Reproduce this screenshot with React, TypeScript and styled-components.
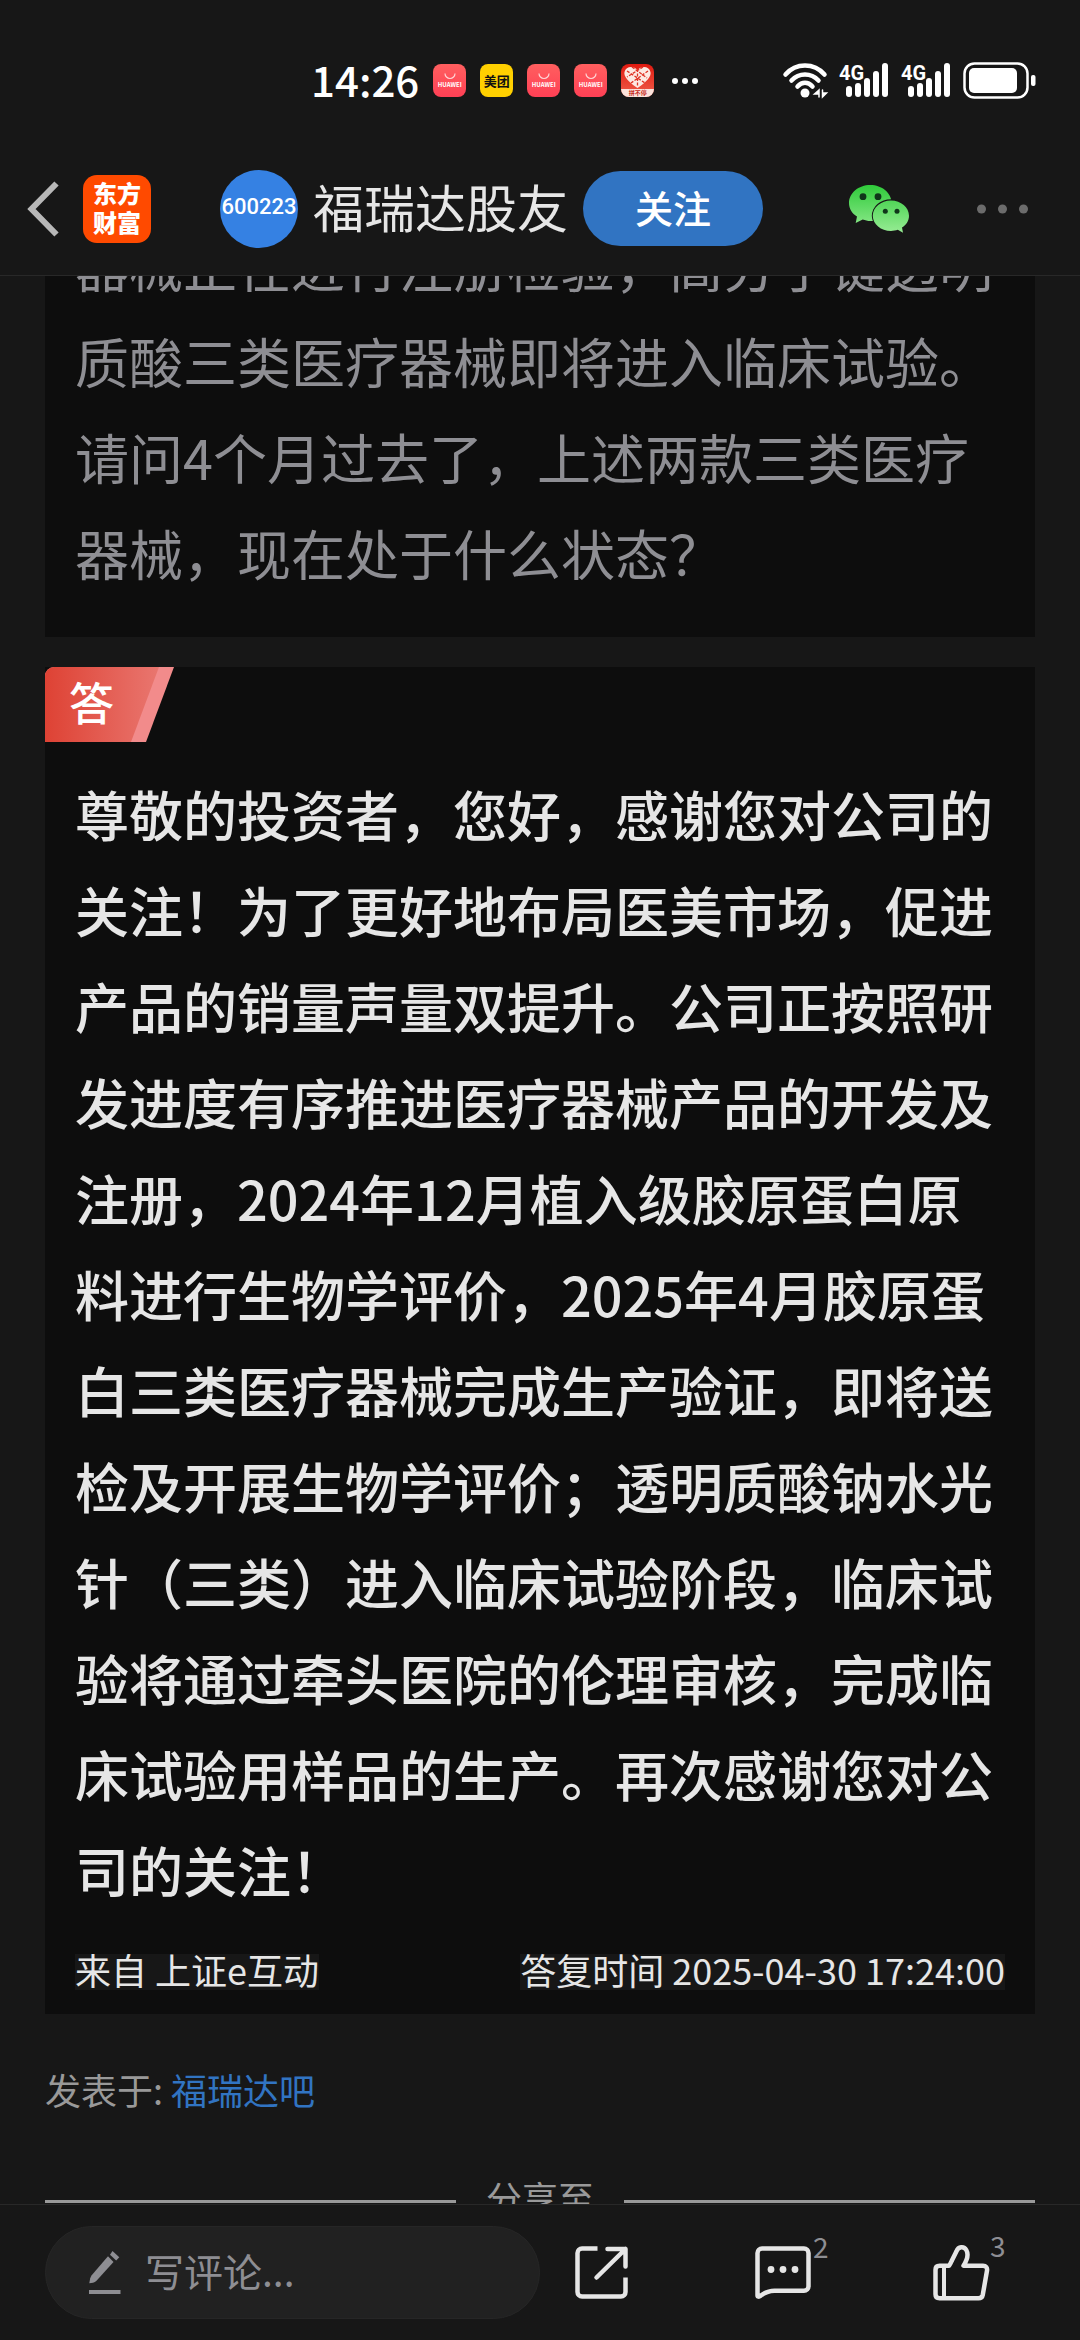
import React from "react";
import styled, { createGlobalStyle } from "styled-components";

const GlobalStyle = createGlobalStyle`
  *, *::before, *::after { box-sizing: border-box; }
  body {
    margin: 0;
    background: #171717;
    color: #e6e6e6;
    font-family: "Noto Sans CJK SC", "Noto Sans", sans-serif;
  }
  button, input { font-family: inherit; }
  button { border: 0; padding: 0; background: none; color: inherit; }
  svg { display: block; flex: none; overflow: visible; }
`;

const Screen = styled.div`
  display: flex;
  flex-direction: column;
  height: 100vh;
  background: #171717;
`;

/* ---------- status bar ---------- */

const StatusBar = styled.div`
  flex: none;
  display: flex;
  align-items: center;
  justify-content: space-between;
  height: 142px;
  padding: 19px 44px 0 311px;
`;

const StatusGroup = styled.div<{ $gap: number }>`
  display: flex;
  align-items: center;
  gap: ${(p) => p.$gap}px;
`;

const Clock = styled.time`
  padding-bottom: 4px;
  font-size: 42px;
  font-weight: 500;
  line-height: 48px;
  color: #fff;
`;

const AppBadge = styled.span<{ $bg: string; $color: string; $size: number }>`
  display: flex;
  flex-direction: column;
  align-items: center;
  justify-content: center;
  width: 33px;
  height: 33px;
  border-radius: 8px;
  overflow: hidden;
  background: ${(p) => p.$bg};
  color: ${(p) => p.$color};
  font-size: ${(p) => p.$size}px;
  font-weight: 700;
  line-height: 8px;
  white-space: nowrap;
`;

const PromoStrip = styled.span`
  width: 100%;
  text-align: center;
  background: #fbe3dc;
  color: #c4291c;
`;

/* ---------- header ---------- */

const Header = styled.header`
  flex: none;
  display: flex;
  align-items: center;
  height: 134px;
  padding: 0 52px 0 27px;
  border-bottom: 1px solid #282828;
`;

const IconButton = styled.button`
  position: relative;
  display: flex;
  align-items: center;
  cursor: pointer;
`;

const Logo = styled.span`
  display: flex;
  align-items: center;
  justify-content: center;
  width: 68px;
  height: 68px;
  margin-left: 24px;
  padding-bottom: 4px;
  border-radius: 14px;
  background: #ff4a00;
  color: #fff;
  font-size: 24px;
  font-weight: 900;
  line-height: 29px;
  text-align: center;
`;

const Author = styled.div`
  display: flex;
  align-items: center;
  margin: 0 auto 0 69px;
`;

const Avatar = styled.span`
  display: flex;
  align-items: center;
  justify-content: center;
  width: 78px;
  height: 78px;
  padding-bottom: 4px;
  border-radius: 50%;
  background: #3581e3;
  color: #fff;
  font-family: Roboto, sans-serif;
  font-size: 22px;
  font-weight: 500;
`;

const AuthorName = styled.h1`
  margin: 0 15px;
  padding-bottom: 6px;
  font-size: 51px;
  font-weight: 400;
  line-height: 60px;
  white-space: nowrap;
`;

const FollowButton = styled.button`
  width: 180px;
  height: 75px;
  padding-bottom: 4px;
  border-radius: 38px;
  background: #3174c2;
  color: #fff;
  font-size: 38px;
  font-weight: 500;
  line-height: 48px;
  cursor: pointer;
`;

const HeaderActions = styled.div`
  display: flex;
  align-items: center;
  gap: 68px;
`;

/* ---------- post ---------- */

const Scroller = styled.main`
  flex: 1;
  min-height: 0;
  overflow: hidden;
  padding: 0 45px;
`;

const Card = styled.section`
  background: #0d0d0d;
  overflow: hidden;
  & + & { margin-top: 30px; }
`;

/* The post is scrolled: its top line is half under the header. */
const Question = styled.p`
  margin: -59px 0 36px;
  padding: 0 30px;
  color: #8e8e93;
  font-size: 54px;
  line-height: 96px;
`;

const AnswerTag = styled.div`
  width: 129px;
  height: 75px;
  border-top-left-radius: 9px;
  background: #f28b8b;
  clip-path: polygon(0 0, 100% 0, 101px 100%, 0 100%);
`;

const TagFace = styled.span`
  display: flex;
  align-items: center;
  width: 114px;
  height: 100%;
  padding: 0 0 6px 24px;
  border-top-left-radius: 9px;
  background: linear-gradient(90deg, #de4234, #e9766f);
  clip-path: polygon(0 0, 100% 0, 86px 100%, 0 100%);
  color: #fff;
  font-size: 45px;
  font-weight: 500;
  line-height: 60px;
`;

const Answer = styled.p`
  margin: 24px 0 36px;
  padding: 0 30px;
  font-size: 54px;
  font-weight: 500;
  line-height: 96px;
`;

const Source = styled.div`
  display: flex;
  justify-content: space-between;
  padding: 0 30px 24px;
  font-size: 36px;
  line-height: 30px;
`;

const SourceItem = styled.span`
  padding-bottom: 6px;
  background: #171717;
`;

const PostedIn = styled.p`
  margin: 48px 0 0;
  color: #999;
  font-size: 36px;
  line-height: 54px;
`;

const BarLink = styled.a`
  color: #3174c2;
  text-decoration: none;
`;

const ShareDivider = styled.div`
  display: flex;
  align-items: center;
  gap: 30px;
  margin-top: 54px;
  color: #999;
  font-size: 36px;
  line-height: 54px;
  &::before, &::after {
    content: "";
    flex: 1;
    height: 3px;
    margin-top: 9px;
    background: #999;
  }
`;

/* ---------- bottom bar ---------- */

const BottomBar = styled.footer`
  flex: none;
  display: flex;
  align-items: center;
  height: 136px;
  padding: 0 90px 0 45px;
  border-top: 1px solid #282828;
`;

const CommentBox = styled.label`
  flex: none;
  display: flex;
  align-items: center;
  gap: 24px;
  width: calc(50vw - 45px);
  height: 93px;
  padding: 0 43px;
  border: 1px solid #262626;
  border-radius: 47px;
  background: #212121;
`;

const CommentInput = styled.input`
  flex: 1;
  min-width: 0;
  padding: 0 0 6px;
  border: 0;
  outline: 0;
  background: transparent;
  color: #e6e6e6;
  font-size: 39px;
  line-height: 54px;
  &::placeholder { color: #8e8e93; opacity: 1; }
`;

const Actions = styled.div`
  flex: 1;
  display: flex;
  align-items: center;
  justify-content: space-between;
  margin-left: 35px;
`;

const Count = styled.span`
  position: absolute;
  left: 100%;
  top: -14px;
  color: #8e8e93;
  font-size: 28px;
  line-height: 28px;
`;

/* ---------- drawings ---------- */

const HuaweiBadge = () => (
  <AppBadge $bg="linear-gradient(#ff5f5f, #ff4055)" $color="#fff" $size={6}>
    <svg width="14" height="8" viewBox="0 0 14 8" fill="none" stroke="#ffd5d5" strokeWidth="1.2">
      <path d="M2 0.5a5 5 0 0 0 10 0" />
    </svg>
    HUAWEI
  </AppBadge>
);

const Signal = () => (
  <svg width="51" height="35" viewBox="0 0 51 35" fill="#fff">
    <text x="0" y="17" fontSize="20" fontWeight="700" fontFamily="Roboto, sans-serif">4G</text>
    <rect x="7" y="23" width="6" height="11" rx="3" />
    <rect x="16" y="20" width="6" height="14" rx="3" />
    <rect x="25" y="15" width="6" height="19" rx="3" />
    <rect x="34" y="8" width="6" height="26" rx="3" />
    <rect x="43" y="0" width="6" height="34" rx="3" />
  </svg>
);

const Wifi = () => (
  <svg width="45" height="36" viewBox="0 0 45 36" fill="none" stroke="#fff" strokeWidth="4.500" strokeLinecap="round">
    <path d="M2.500 11.500C13-0.500 31-0.500 41.500 11.500" />
    <path d="M8.500 17.500C16 9.500 28 9.500 35.500 17.500" />
    <path d="M14.500 23.500C19 18.500 25 18.500 29.500 23.500" />
    <circle cx="22" cy="30" r="4.500" fill="#fff" stroke="none" />
    <path d="M36 27v7M36 27l-4.500 4H36zM39.500 27v7M39.500 34l4-4h-4z" strokeWidth="1.500" fill="#fff" />
  </svg>
);

const Battery = () => (
  <svg width="73" height="37" viewBox="0 0 73 37" fill="none">
    <rect x="1.500" y="1.500" width="63" height="34" rx="10" stroke="#fff" strokeWidth="2.500" />
    <rect x="6" y="6" width="48" height="25" rx="5" fill="#fff" />
    <rect x="68" y="13" width="4.500" height="11" rx="2" fill="#fff" />
  </svg>
);

const WeChat = () => (
  <svg width="60" height="48" viewBox="0 0 60 48">
    <defs>
      <linearGradient id="wechat" gradientUnits="userSpaceOnUse" x1="0" y1="0" x2="0" y2="48">
        <stop offset="0" stopColor="#2fcb3a" />
        <stop offset="1" stopColor="#98ec95" />
      </linearGradient>
    </defs>
    <g fill="url(#wechat)">
      <path d="M21.300 0C9.500 0 0 8 0 18c0 5.700 3 10.500 8 13.600L6.700 38l7-3.500c2.500 0.900 5 1.500 7.600 1.500C33 36 42.600 28 42.600 18S33 0 21.300 0z" />
      <ellipse cx="42" cy="30.700" rx="19.200" ry="16.500" fill="#171717" />
      <path d="M42 15.400c-10 0-18.200 6.900-18.200 15.300S32 46 42 46c2.300 0 4.700-0.500 6.800-1.200l5.200 3-1-5.200c4.300-2.800 7-7 7-11.900 0-8.400-8-15.300-18-15.300z" />
    </g>
    <g fill="#10361a">
      <circle cx="14" cy="11.700" r="3.400" />
      <circle cx="29" cy="11.700" r="3.400" />
      <circle cx="36.300" cy="26.300" r="2.500" />
      <circle cx="48" cy="26.300" r="2.500" />
    </g>
  </svg>
);

const Pencil = () => (
  <svg width="32" height="44" viewBox="0 0 32 44" fill="#8e8e93">
    <path d="M23.500 0l6.800 6.300-3.100 3.200L21 3.700z" />
    <path d="M19 5.300l5.500 5.700L7.500 29.700q-1.500 1.500-3.500 2L0.300 32.300l0.900-5q0.500-1.600 1.500-3z" />
    <path d="M0 39h31.500v4H0z" />
  </svg>
);

const line = {
  fill: "none",
  stroke: "#e6e6e6",
  strokeWidth: 4.5,
  strokeLinejoin: "round" as const,
};

const ShareIcon = () => (
  <svg width="60" height="54" viewBox="0 0 60 54" {...line}>
    <path d="M22.500 2.500H7A4.500 4.500 0 0 0 2.500 7v39A4.500 4.500 0 0 0 7 50.500h39a4.500 4.500 0 0 0 4.500-4.500V31.500" />
    <path d="M32.500 3H50.500M50.500 3v17.500M50.500 3L21.500 31.500" strokeLinecap="round" />
  </svg>
);

const CommentIcon = () => (
  <svg width="58" height="54" viewBox="0 0 58 54" {...line}>
    <path d="M2.500 49.500V7A4.500 4.500 0 0 1 7 2.500h42A4.500 4.500 0 0 1 53.500 7v33.200a4.500 4.500 0 0 1-4.500 4.500H19.500c-6 0-10.500 2.300-14.200 5.300-1.200 0.900-2.800 0.900-2.800-0.500z" />
    <g fill="#e6e6e6" stroke="none">
      <circle cx="16" cy="23.500" r="3.400" />
      <circle cx="28" cy="23.500" r="3.400" />
      <circle cx="40" cy="23.500" r="3.400" />
    </g>
  </svg>
);

const LikeIcon = () => (
  <svg width="57" height="56" viewBox="0 0 57 56" {...line}>
    <path d="M6.500 20.700H16c1.300-1.500 2-3.300 3-5.500l4.500-9C25.300 1.500 31 1 33.300 5c2.500 4.500 1.200 9.500-2.800 15.700H50c3 0 4.500 2 4 5l-4.200 24c-0.500 2.500-1.800 3.600-4.300 3.600h-39c-2.500 0-4-1.500-4-4V24.700c0-2.500 1.500-4 4-4z" />
    <path d="M11 20.700v32.600" strokeWidth="4" />
  </svg>
);

export default function App() {
  return (
    <Screen>
      <GlobalStyle />
      <StatusBar>
        <StatusGroup $gap={14}>
          <Clock>14:26</Clock>
          <HuaweiBadge />
          <AppBadge $bg="#ffd000" $color="#111" $size={13}>美团</AppBadge>
          <HuaweiBadge />
          <HuaweiBadge />
          <AppBadge $bg="linear-gradient(#e01a10, #f0604c)" $color="#fff" $size={6}>
            <svg width="29" height="25" viewBox="0 0 29 25">
              <path d="M14.500 24C5 17.500 0.500 12.500 1.500 8 3 2 10.500 1.500 14.500 6c4-4.500 11.500-4 13 2 1 4.500-3.500 9.500-13 16z" fill="#fde9e2" />
              <path d="M4 7l18 12M9 3l15 11M25 7L8 19M20 3L4 13M14.500 5v18" stroke="#df3324" strokeWidth="1.300" strokeDasharray="3 1.500" fill="none" />
            </svg>
            <PromoStrip>拼不停</PromoStrip>
          </AppBadge>
          <svg width="32" height="8" viewBox="0 0 32 8" fill="#fff">
            <circle cx="7" cy="4" r="3" />
            <circle cx="17" cy="4" r="3" />
            <circle cx="27" cy="4" r="3" />
          </svg>
        </StatusGroup>
        <StatusGroup $gap={11}>
          <Wifi />
          <Signal />
          <Signal />
          <Battery />
        </StatusGroup>
      </StatusBar>

      <Header>
        <IconButton aria-label="返回">
          <svg width="32" height="56" viewBox="0 0 32 56" fill="none" stroke="#b8b8b8" strokeWidth="6">
            <path d="M29.500 2.500L4.500 28l25 25.500" />
          </svg>
        </IconButton>
        <Logo>东方<br />财富</Logo>
        <Author>
          <Avatar>600223</Avatar>
          <AuthorName>福瑞达股友</AuthorName>
          <FollowButton>关注</FollowButton>
        </Author>
        <HeaderActions>
          <IconButton aria-label="分享到微信"><WeChat /></IconButton>
          <IconButton aria-label="更多">
            <svg width="51" height="10" viewBox="0 0 51 10" fill="#6c6c6c">
              <circle cx="4.500" cy="5" r="4.500" />
              <circle cx="25.500" cy="5" r="4.500" />
              <circle cx="46.500" cy="5" r="4.500" />
            </svg>
          </IconButton>
        </HeaderActions>
      </Header>

      <Scroller>
        <Card>
          <Question>
            器械正在进行注册检验，高分子键透明质酸三类医疗器械即将进入临床试验。请问4个月过去了，上述两款三类医疗器械，现在处于什么状态？
          </Question>
        </Card>
        <Card>
          <AnswerTag><TagFace>答</TagFace></AnswerTag>
          <Answer>
            尊敬的投资者，您好，感谢您对公司的关注！为了更好地布局医美市场，促进产品的销量声量双提升。公司正按照研发进度有序推进医疗器械产品的开发及注册，2024年12月植入级胶原蛋白原料进行生物学评价，2025年4月胶原蛋白三类医疗器械完成生产验证，即将送检及开展生物学评价；透明质酸钠水光针（三类）进入临床试验阶段，临床试验将通过牵头医院的伦理审核，完成临床试验用样品的生产。再次感谢您对公司的关注！
          </Answer>
          <Source>
            <SourceItem>来自 上证e互动</SourceItem>
            <SourceItem>答复时间 2025-04-30 17:24:00</SourceItem>
          </Source>
        </Card>
        <PostedIn>
          发表于: <BarLink href="#bar">福瑞达吧</BarLink>
        </PostedIn>
        <ShareDivider>分享至</ShareDivider>
      </Scroller>

      <BottomBar>
        <CommentBox>
          <Pencil />
          <CommentInput type="text" placeholder="写评论..." aria-label="写评论" />
        </CommentBox>
        <Actions>
          <IconButton aria-label="分享"><ShareIcon /></IconButton>
          <IconButton aria-label="评论"><CommentIcon /><Count>2</Count></IconButton>
          <IconButton aria-label="点赞"><LikeIcon /><Count>3</Count></IconButton>
        </Actions>
      </BottomBar>
    </Screen>
  );
}
